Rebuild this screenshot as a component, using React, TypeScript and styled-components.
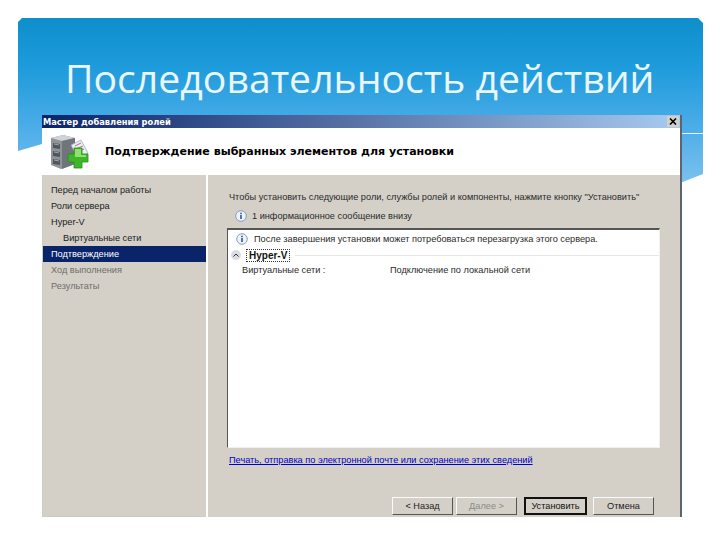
import React from "react";
import styled, { createGlobalStyle } from "styled-components";

const GlobalStyle = createGlobalStyle`
  html, body {
    margin: 0;
    padding: 0;
    background: #ffffff;
  }
`;

const Slide = styled.div`
  position: relative;
  width: 720px;
  height: 540px;
  overflow: hidden;
  background: #ffffff;
  display: flex;
  flex-direction: column;
  padding: 55px 38px 23px 42px;
  box-sizing: border-box;
`;

const Banner = styled.div`
  position: absolute;
  left: 18px;
  top: 18px;
  width: 685px;
  height: 165px;
  background: linear-gradient(180deg, #0d8fcb 0%, #1e9bdb 30%, #4aace8 65%, #7cc1ef 100%);
  clip-path: polygon(0 4px, 4px 0, 680px 0, 685px 5px, 685px 156px, 662px 165px, 24px 126px, 0 133px);
`;

const FoldLine = styled.div`
  position: absolute;
  left: 682px;
  top: 133px;
  width: 21px;
  height: 1px;
  background: #e4f3fc;
`;

const Title = styled.h1`
  position: relative;
  flex: none;
  margin: 0 0 0 23px;
  height: 60px;
  font-family: "Open Sans", sans-serif;
  font-weight: 400;
  font-size: 39.2px;
  line-height: 46px;
  color: #e9f6fb;
  white-space: nowrap;
`;

const Wizard = styled.div`
  position: relative;
  flex: 1;
  min-height: 0;
  display: flex;
  flex-direction: column;
  background: #ffffff;
  border-right: 2px solid #5b6572;
  font-family: "Liberation Sans", Arial, sans-serif;
  font-size: 9.2px;
  color: #2a2a2a;
`;

const TitleBar = styled.div`
  flex: none;
  height: 13px;
  display: flex;
  align-items: center;
  justify-content: space-between;
  padding: 0 1px 0 1px;
  background: linear-gradient(90deg, #0a246a 0%, #5a74a8 50%, #a6caf0 100%);
  color: #ffffff;
  font-family: "DejaVu Sans", sans-serif;
  font-size: 8.3px;
  font-weight: 700;
`;

const CloseButton = styled.span`
  width: 12px;
  height: 11px;
  display: flex;
  align-items: center;
  justify-content: center;
  background: #d4d0c8;
  color: #000000;
`;

const Header = styled.div`
  flex: none;
  height: 47px;
  display: flex;
  align-items: center;
  gap: 15px;
  padding-left: 8px;
`;

const HeaderText = styled.h2`
  margin: 0;
  font-family: "DejaVu Sans", sans-serif;
  font-size: 11.05px;
  font-weight: 700;
  color: #000000;
`;

const Body = styled.div`
  flex: 1;
  min-height: 0;
  display: flex;
  gap: 2px;
`;

const Nav = styled.nav`
  width: 164px;
  padding-top: 7px;
  box-sizing: border-box;
  background: #d4d0c8;
  border-left: 1px solid #c8cfbb;
  border-bottom: 1px solid #c8cfbb;
`;

const NavItem = styled.div<{ $active?: boolean; $muted?: boolean; $sub?: boolean }>`
  height: 16px;
  display: flex;
  align-items: center;
  padding-left: ${(p) => (p.$sub ? 20 : 8)}px;
  background: ${(p) => (p.$active ? "#0a246a" : "transparent")};
  color: ${(p) => (p.$active ? "#ffffff" : p.$muted ? "#6e6d68" : "#1c1c1c")};
`;

const Main = styled.main`
  flex: 1;
  display: flex;
  flex-direction: column;
  padding: 15px 20px 2px 19px;
  background: #d4d0c8;
`;

const Intro = styled.div`
  height: 14px;
  padding-left: 2px;
  line-height: 14px;
  white-space: nowrap;
`;

const Notice = styled.div`
  height: 23px;
  display: flex;
  align-items: center;
  gap: 5px;
  padding-left: 8px;
  margin-top: 1px;
`;

const Report = styled.div`
  height: 221px;
  box-sizing: border-box;
  background: #ffffff;
  border-top: 2px solid #555555;
  border-left: 1px solid #555555;
  border-right: 1px solid #f2f0ea;
  border-bottom: 1px solid #f2f0ea;
`;

const ReportNotice = styled.div`
  height: 18px;
  display: flex;
  align-items: center;
  gap: 6px;
  padding-left: 8px;
`;

const SectionRow = styled.div`
  height: 15px;
  display: flex;
  align-items: center;
  padding-left: 3px;
  gap: 5px;
`;

const Chevron = styled.span`
  width: 10px;
  height: 10px;
  border-radius: 50%;
  background: #d9dde2;
  display: flex;
  align-items: center;
  justify-content: center;
`;

const SectionName = styled.span`
  border: 1px dotted #333333;
  padding: 0 2px;
  font-size: 10px;
  font-weight: 700;
  color: #111111;
`;

const SectionRule = styled.span`
  flex: 1;
  height: 1px;
  background: #e6e6e6;
`;

const DataRow = styled.div`
  height: 15px;
  display: grid;
  grid-template-columns: 148px 1fr;
  align-items: center;
  padding-left: 14px;
`;

const PrintLink = styled.a`
  margin-top: 5px;
  padding-left: 2px;
  line-height: 14px;
  color: #0000c8;
  text-decoration: underline;
  white-space: nowrap;
`;

const Buttons = styled.div`
  margin-top: 30px;
  display: flex;
  justify-content: flex-end;
  margin-right: 6px;
`;

const Button = styled.button<{ $primary?: boolean; $gapLeft?: number }>`
  width: ${(p) => (p.$primary ? 63 : 61)}px;
  height: 18px;
  margin-left: ${(p) => p.$gapLeft ?? 3}px;
  padding: 0;
  box-sizing: border-box;
  background: #d4d0c8;
  font-family: "Liberation Sans", Arial, sans-serif;
  font-size: 9.2px;
  color: ${(p) => (p.$primary ? "#111111" : "#222222")};
  border: ${(p) => (p.$primary ? "2px solid #111111" : "1px solid #555555")};
  border-top-color: ${(p) => (p.$primary ? "#111111" : "#fafafa")};
  border-left-color: ${(p) => (p.$primary ? "#111111" : "#fafafa")};
  &:disabled {
    color: #8b8a85;
  }
`;

const InfoIcon: React.FC = () => (
  <svg width="12" height="12" viewBox="0 0 12 12">
    <circle cx="6" cy="6" r="5.3" fill="#eef3fa" stroke="#8a9cc0" />
    <rect x="5.2" y="5" width="1.6" height="4" fill="#2f55a4" />
    <rect x="5.2" y="2.7" width="1.6" height="1.5" fill="#2f55a4" />
  </svg>
);

const CloseIcon: React.FC = () => (
  <svg width="8" height="7" viewBox="0 0 8 7">
    <path d="M1 0.5 L7 6.5 M7 0.5 L1 6.5" stroke="#000000" strokeWidth="1.6" />
  </svg>
);

const ServerIcon: React.FC = () => (
  <svg width="40" height="36" viewBox="0 0 40 36">
    <path d="M1 4 L13 1 L25 4 L25 30 L11 35 L1 31 Z" fill="#8e9499" />
    <path d="M1 4 L13 1 L25 4 L12 7 Z" fill="#cfd3d6" />
    <path d="M12 7 L25 4 L25 30 L12 35 Z" fill="#6f757a" />
    <path d="M3 9 L10 10 L10 15 L3 14 Z M3 17 L10 18 L10 23 L3 22 Z M3 25 L10 26 L10 31 L3 30 Z" fill="#4f555a" />
    <path d="M4 10 L9 11 M4 18 L9 19 M4 26 L9 27" stroke="#b4b9bd" strokeWidth="0.8" />
    <path d="M21 11 L31 6 L38 19 L28 25 Z" fill="#e8ecf4" stroke="#9aa4bc" strokeWidth="0.7" />
    <path d="M25 12 L31 9 M26 15 L33 12 M28 18 L34 15" stroke="#b8707e" strokeWidth="1" />
    <path d="M24 14 H32 V20 H38 V28 H32 V34 H24 V28 H18 V20 H24 Z" fill="#3fb52c" stroke="#2c8f20" strokeWidth="0.8" />
    <path d="M25 15 H31 V21 H36 V23 H25 Z" fill="#8fe070" />
  </svg>
);

const steps = [
  { label: "Перед началом работы" },
  { label: "Роли сервера" },
  { label: "Hyper-V" },
  { label: "Виртуальные сети", sub: true },
  { label: "Подтверждение", active: true },
  { label: "Ход выполнения", muted: true },
  { label: "Результаты", muted: true },
];

const App: React.FC = () => {
  return (
    <Slide>
      <GlobalStyle />
      <Banner />
      <FoldLine />
      <Title>Последовательность действий</Title>
      <Wizard>
        <TitleBar>
          <span>Мастер добавления ролей</span>
          <CloseButton>
            <CloseIcon />
          </CloseButton>
        </TitleBar>
        <Header>
          <ServerIcon />
          <HeaderText>Подтверждение выбранных элементов для установки</HeaderText>
        </Header>
        <Body>
          <Nav>
            {steps.map((step) => (
              <NavItem key={step.label} $active={step.active} $muted={step.muted} $sub={step.sub}>
                {step.label}
              </NavItem>
            ))}
          </Nav>
          <Main>
            <Intro>Чтобы установить следующие роли, службы ролей и компоненты, нажмите кнопку "Установить"</Intro>
            <Notice>
              <InfoIcon />1 информационное сообщение внизу
            </Notice>
            <Report>
              <ReportNotice>
                <InfoIcon />После завершения установки может потребоваться перезагрузка этого сервера.
              </ReportNotice>
              <SectionRow>
                <Chevron>
                  <svg width="6" height="4" viewBox="0 0 6 4">
                    <path d="M0.5 3.5 L3 1 L5.5 3.5" fill="none" stroke="#333333" />
                  </svg>
                </Chevron>
                <SectionName>Hyper-V</SectionName>
                <SectionRule />
              </SectionRow>
              <DataRow>
                <span>Виртуальные сети :</span>
                <span>Подключение по локальной сети</span>
              </DataRow>
            </Report>
            <PrintLink href="#">Печать, отправка по электронной почте или сохранение этих сведений</PrintLink>
            <Buttons>
              <Button>&lt; Назад</Button>
              <Button disabled>Далее &gt;</Button>
              <Button $primary $gapLeft={7}>Установить</Button>
              <Button $gapLeft={6}>Отмена</Button>
            </Buttons>
          </Main>
        </Body>
      </Wizard>
    </Slide>
  );
};

export default App;
